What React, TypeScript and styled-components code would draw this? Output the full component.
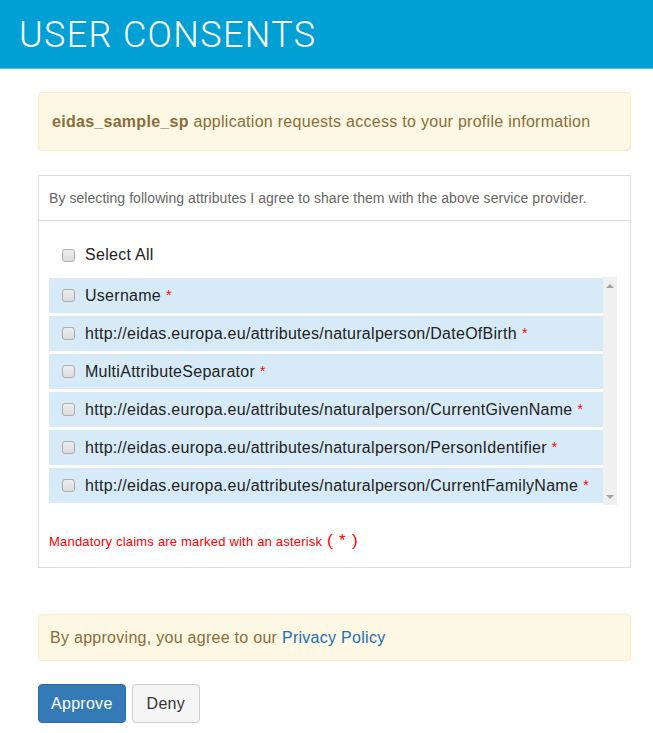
import React from "react";
import styled, { createGlobalStyle } from "styled-components";

const attributes = [
  "Username",
  "http://eidas.europa.eu/attributes/naturalperson/DateOfBirth",
  "MultiAttributeSeparator",
  "http://eidas.europa.eu/attributes/naturalperson/CurrentGivenName",
  "http://eidas.europa.eu/attributes/naturalperson/PersonIdentifier",
  "http://eidas.europa.eu/attributes/naturalperson/CurrentFamilyName",
];

const App = () => {
  return (
    <>
      <GlobalStyle />
      <Header>
        <Title>USER CONSENTS</Title>
      </Header>
      <Content>
        <Alert $top={23} $pad="19px 13px 18px">
          <b>eidas_sample_sp</b> application requests access to your profile
          information
        </Alert>

        <Panel>
          <PanelHeading>
            By selecting following attributes I agree to share them with the
            above service provider.
          </PanelHeading>
          <PanelBody>
            <SelectAll>
              <Check type="checkbox" />
              Select All
            </SelectAll>
            <ListFrame>
              <List>
                {attributes.map((name) => (
                  <Row key={name}>
                    <Check type="checkbox" />
                    {name}
                    <Star>*</Star>
                  </Row>
                ))}
              </List>
              <Track>
                <Arrow $dir="up" />
                <Arrow $dir="down" />
              </Track>
            </ListFrame>
            <Mandatory>
              Mandatory claims are marked with an asterisk <Paren>( * )</Paren>
            </Mandatory>
          </PanelBody>
        </Panel>

        <Alert $top={46} $pad="13px 11px 12px">
          By approving, you agree to our <Link href="#">Privacy Policy</Link>
        </Alert>

        <Buttons>
          <Button $primary>Approve</Button>
          <Button>Deny</Button>
        </Buttons>
      </Content>
    </>
  );
};

const GlobalStyle = createGlobalStyle`
  body {
    margin: 0;
    background: #fff;
    font-family: "Liberation Sans", Arial, sans-serif;
    color: #333;
  }
  * { box-sizing: border-box; }
`;

const Header = styled.header`
  height: 69px;
  background-color: #009fd4;
  border-bottom: 1px solid #5cbfe6;
  display: flex;
  align-items: center;
  padding: 1px 0 0 19px;
`;

const Title = styled.h1`
  margin: 0;
  font-family: Roboto, "Liberation Sans", sans-serif;
  font-weight: 300;
  font-size: 36px;
  letter-spacing: 1.35px;
  color: #fff;
`;

const Content = styled.main`
  padding: 0 22px 20px 38px;
`;

const Alert = styled.div<{ $top: number; $pad: string }>`
  margin-top: ${(p) => p.$top}px;
  padding: ${(p) => p.$pad};
  background-color: #fcf8e3;
  border: 1px solid #faebcc;
  border-radius: 4px;
  color: #8a6d3b;
  font-size: 16px;
  line-height: 20px;
  letter-spacing: 0.28px;
`;

const Link = styled.a`
  color: #1f6fb2;
  text-decoration: none;
`;

const Panel = styled.section`
  margin-top: 24px;
  border: 1px solid #ddd;
  background: #fff;
`;

const PanelHeading = styled.div`
  height: 45px;
  display: flex;
  align-items: center;
  padding: 0 10px 0 10px;
  border-bottom: 1px solid #ddd;
  color: #666;
  font-size: 14px;
  letter-spacing: 0.06px;
`;

const PanelBody = styled.div`
  padding: 0 13px 0 10px;
  height: 346px;
`;

const SelectAll = styled.label`
  display: flex;
  align-items: center;
  height: 56px;
  padding: 12px 0 0 13px;
  font-size: 16px;
  letter-spacing: 0.28px;
  color: #222;
`;

const Check = styled.input`
  appearance: none;
  width: 13px;
  height: 13px;
  margin: 0 10px 0 0;
  border: 1px solid #adadad;
  border-radius: 3px;
  background: linear-gradient(#ededed, #dcdcdc);
  flex: none;
`;

const ListFrame = styled.div`
  display: flex;
  height: 228px;
`;

const List = styled.div`
  flex: 1;
  display: flex;
  flex-direction: column;
  gap: 3px;
  padding-top: 1px;
  overflow: hidden;
`;

const Row = styled.label`
  display: flex;
  align-items: center;
  height: 35px;
  flex: none;
  padding-left: 13px;
  background-color: #d6ebf7;
  font-size: 16px;
  letter-spacing: 0.28px;
  color: #222;
  white-space: nowrap;
`;

const Star = styled.span`
  color: #f00;
  font-size: 14px;
  margin-left: 5px;
  position: relative;
  top: -1px;
`;

const Track = styled.div`
  width: 14px;
  background: #f0f0f0;
  display: flex;
  flex-direction: column;
  justify-content: space-between;
  align-items: center;
  padding: 7px 0 6px;
`;

const Arrow = styled.span<{ $dir: "up" | "down" }>`
  width: 0;
  height: 0;
  border-left: 4px solid transparent;
  border-right: 4px solid transparent;
  ${(p) =>
    p.$dir === "up"
      ? "border-bottom: 4px solid #a3a3a3;"
      : "border-top: 4px solid #a3a3a3;"}
`;

const Mandatory = styled.p`
  margin: 26px 0 0;
  color: #f00;
  font-size: 13px;
  letter-spacing: 0.2px;
`;

const Paren = styled.span`
  font-size: 17px;
  margin-left: 1px;
  letter-spacing: 0.8px;
`;

const Buttons = styled.div`
  display: flex;
  gap: 6px;
  margin-top: 23px;
`;

const Button = styled.button<{ $primary?: boolean }>`
  height: 39px;
  padding: 0 ${(p) => (p.$primary ? 12 : 14)}px;
  font-family: "Liberation Sans", Arial, sans-serif;
  font-size: 16px;
  letter-spacing: 0.28px;
  border-radius: 4px;
  border: 1px solid ${(p) => (p.$primary ? "#2e6da4" : "#ccc")};
  background: ${(p) => (p.$primary ? "#337ab7" : "#f5f5f5")};
  color: ${(p) => (p.$primary ? "#fff" : "#333")};
`;

export default App;
